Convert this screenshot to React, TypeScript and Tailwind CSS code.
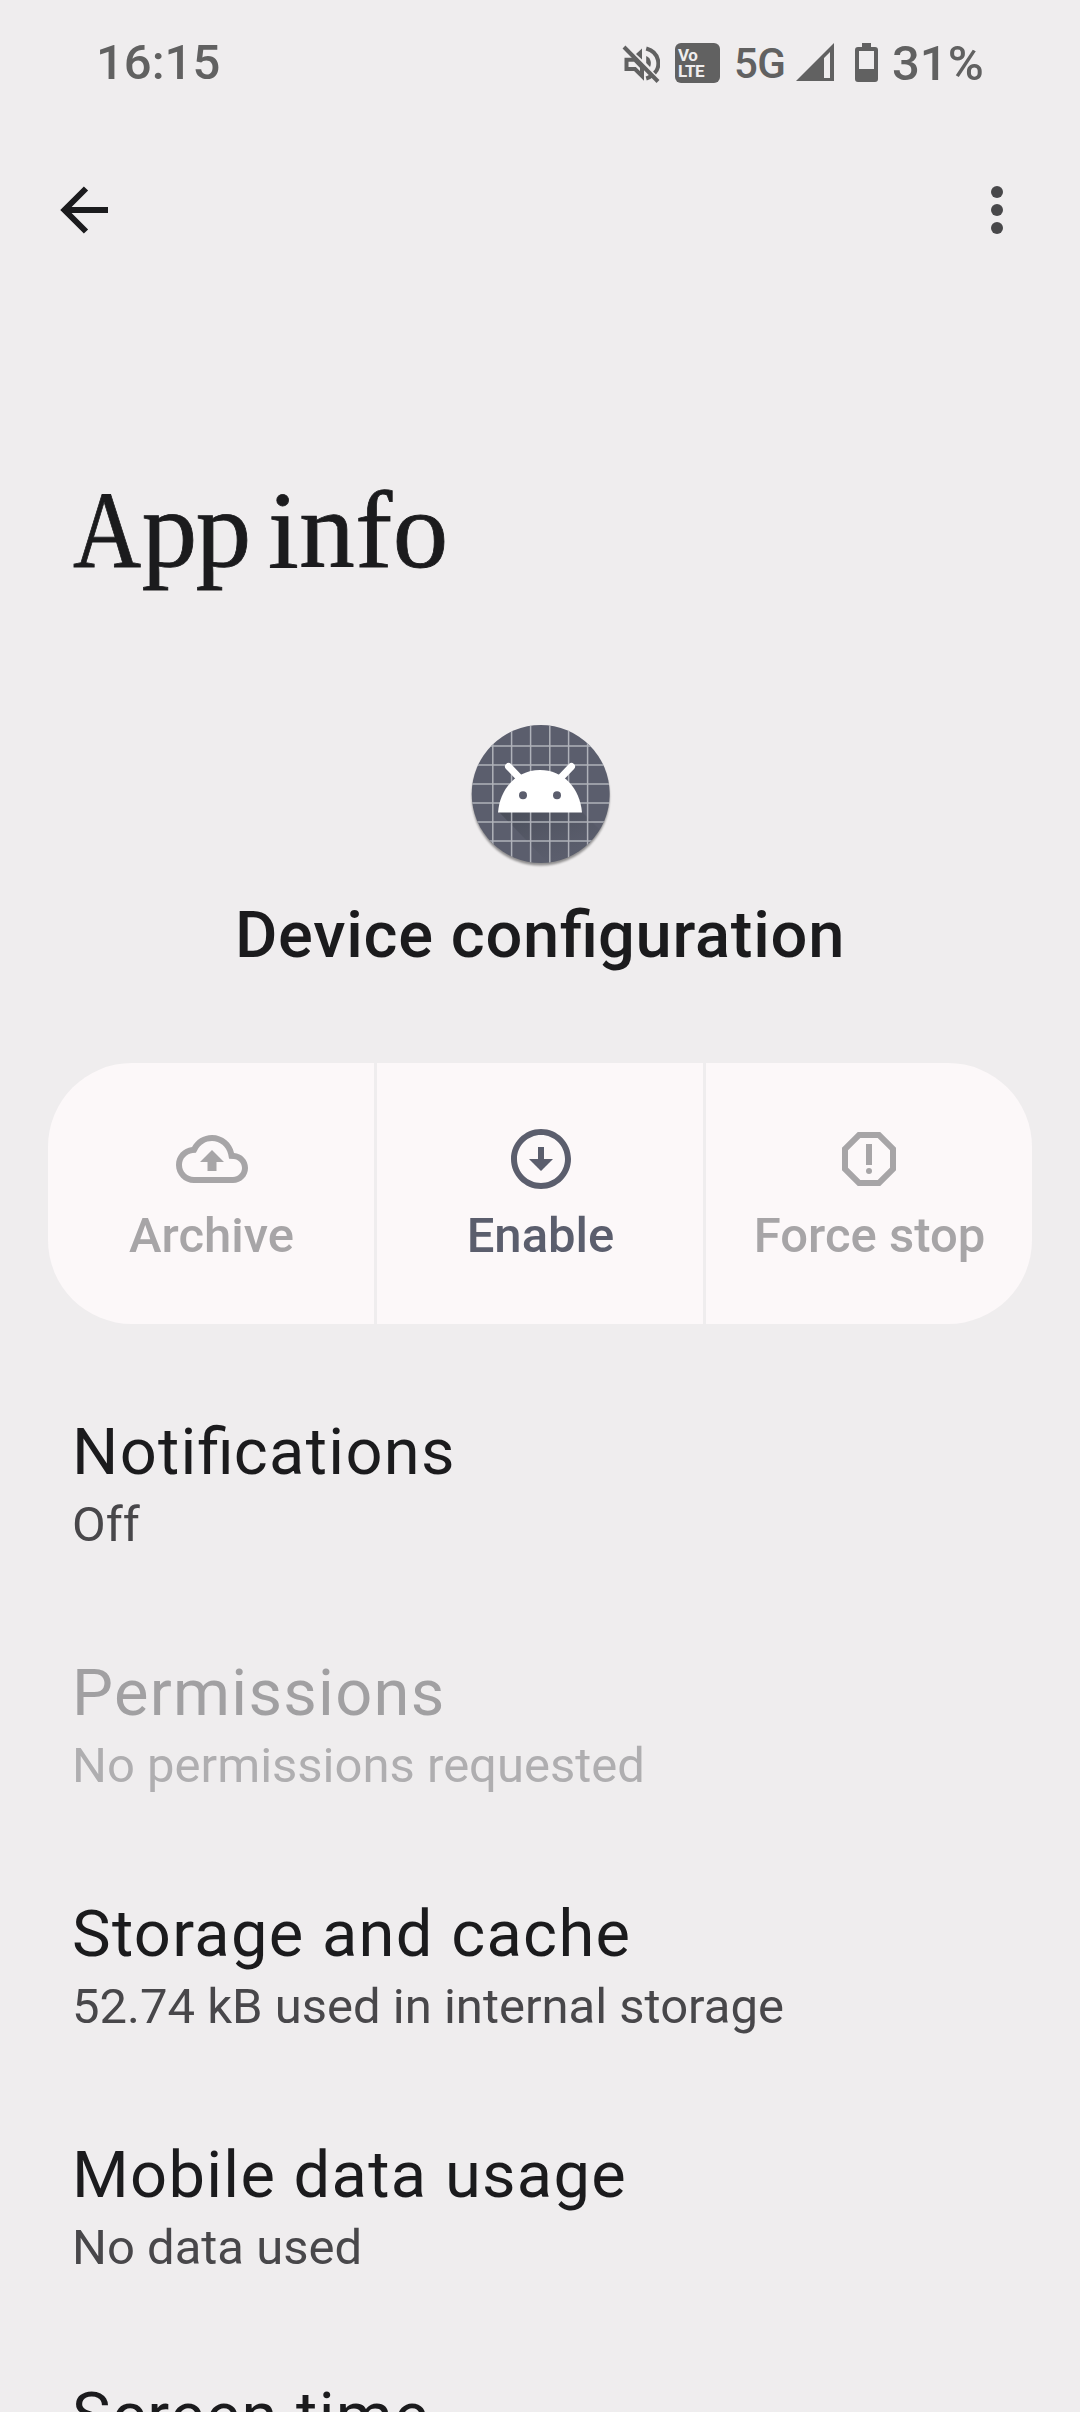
import React from "react";

function Fi() {
  return <span className="tracking-normal">fi</span>;
}

function StatusBar() {
  return (
    <header className="flex h-[120px] w-full text-[#616161]">
      <div className="ml-[96px] mt-[34px] w-[503px] shrink-0 text-[49px] font-medium leading-[58px]">16:15</div>
      <div className="flex">
        <svg className="ml-[23px] mt-[44px] h-[40px] w-[38px] shrink-0" viewBox="0 0 38 40" fill="none" stroke="#616161">
          <path d="M4.5 15.8H13L20 23V32L13 25H4.5Z" strokeWidth="4" />
          <path d="M14 10L20 4.5V15.500Z" fill="#616161" stroke="none" />
          <path d="M24.2 4.500C38.500 8.500 38.500 23 32.500 29M24.200 34.500C26 34 28 33 29.500 31.500" strokeWidth="4" />
          <path d="M24.200 12C29.500 14.500 29.500 20 28 23L24.200 19Z" fill="#616161" stroke="none" />
          <path d="M2 3L36 37.500" strokeWidth="4" />
        </svg>
        <div className="ml-[15px] mt-[43px] h-[40px] w-[45px] shrink-0 rounded-[6px] bg-[#616161] pl-[3px] pt-[4px] text-[17px] font-bold leading-[16px] tracking-[-0.4px] text-[#efedee]">
          <div>Vo</div>
          <div>LTE</div>
        </div>
        <div className="ml-[14px] mt-[40px] w-[52px] shrink-0 text-[42px] font-medium leading-[48px] tracking-[-0.5px]">5G</div>
        <svg className="ml-[10px] mt-[43px] h-[39px] w-[38px] shrink-0" viewBox="0 0 38 39">
          <path fillRule="evenodd" fill="#616161" d="M0 38L38 0V38ZM28 15V35H34V9Z" />
        </svg>
        <svg className="ml-[21px] mt-[43px] h-[39px] w-[23px] shrink-0" viewBox="0 0 23 39">
          <path fillRule="evenodd" fill="#616161" d="M7 0H16V4H20Q23 4 23 7V36Q23 39 20 39H3Q0 39 0 36V7Q0 4 3 4H7ZM4 8V26H19V8Z" />
        </svg>
        <div className="ml-[14px] mt-[35px] shrink-0 text-[49px] font-medium leading-[58px]">31%</div>
      </div>
    </header>
  );
}

function Toolbar() {
  return (
    <nav className="flex h-[180px] items-start justify-between pl-[48px] pr-[47px] pt-[54px]">
      <svg className="h-[72px] w-[72px]" viewBox="0 0 72 72" fill="none" stroke="#1b1b1d" strokeWidth="6">
        <path d="M60 36H17M38 14.5L16.5 36L38 57.5" />
      </svg>
      <svg className="h-[72px] w-[72px]" viewBox="0 0 72 72" fill="#48484a">
        <circle cx="36" cy="18" r="6" />
        <circle cx="36" cy="36" r="6" />
        <circle cx="36" cy="54" r="6" />
      </svg>
    </nav>
  );
}

function AppIcon() {
  return (
    <svg className="mx-auto h-[150px] w-[150px]" viewBox="0 0 150 150">
      <defs>
        <clipPath id="disc"><circle cx="75.7" cy="74" r="69" /></clipPath>
        <linearGradient id="cast" x1="0" y1="0" x2="0.7" y2="1">
          <stop offset="0" stopColor="#3f444e" stopOpacity="0.65" />
          <stop offset="0.8" stopColor="#4c505c" stopOpacity="0" />
        </linearGradient>
        <filter id="soft" x="-10%" y="-10%" width="120%" height="120%"><feGaussianBlur stdDeviation="1.2" /></filter>
      </defs>
      <circle cx="75.7" cy="76.8" r="68.800" fill="#000" opacity="0.4" filter="url(#soft)" />
      <circle cx="75.7" cy="74" r="69" fill="#5b5e6d" />
      <g clipPath="url(#disc)">
        <path d="M34 92H117L150 125V150H90Z" fill="url(#cast)" />
        <path d="M27.8 0V150M46.6 0V150M65.6 0V150M84.8 0V150M103.6 0V150M122.6 0V150M0 26H150M0 45H150M0 64H150M0 83H150M0 102H150M0 121H150" stroke="#c5c7cd" strokeWidth="1.5" opacity="0.8" />
      </g>
      <path d="M33 92.500C35 68 52 50 75 50S115 68 117 92.500Z" fill="#fff" />
      <path d="M43.500 46.500L55 58.500M106.500 46.500L95 58.500" stroke="#fff" strokeWidth="7" strokeLinecap="round" />
      <circle cx="58" cy="75.300" r="4" fill="#5b5e6d" />
      <circle cx="92" cy="75.300" r="4" fill="#5b5e6d" />
    </svg>
  );
}

function Action({ label, className, iconClass, children }: { label: string; className: string; iconClass: string; children: React.ReactNode }) {
  return (
    <button className={"flex h-[261px] flex-col items-center bg-[#fcf8f9] pt-[60px] " + className}>
      <svg className={"h-[72px] " + iconClass} viewBox="0 0 24 24" fill="currentColor">{children}</svg>
      <span className="mt-[12px] pl-[1px] text-[49px] font-medium leading-[58px]">{label}</span>
    </button>
  );
}

function Item({ title, detail, disabled }: { title: React.ReactNode; detail?: string; disabled?: boolean }) {
  return (
    <div className="h-[241px] pl-[72px]">
      <div className={"text-[65px] leading-[76px] tracking-[1.3px] " + (disabled ? "text-[#a1a0a2]" : "text-[#1b1b1d]")}>{title}</div>
      {detail && <div className={"text-[49px] leading-[70px] " + (disabled ? "text-[#afaeb0]" : "text-[#48474a]")}>{detail}</div>}
    </div>
  );
}

export default function App() {
  return (
    <div className="h-[2412px] w-[1080px] overflow-hidden bg-[#efedee] font-['Roboto',sans-serif]">
      <StatusBar />
      <Toolbar />
      <h1 className="mt-[160px] h-[143px] whitespace-pre pl-[73px] font-['Liberation_Serif',serif] text-[111px] leading-[140px] tracking-[-1.5px] text-[#1b1b1d] [-webkit-text-stroke:0.8px_#1b1b1d] [word-spacing:-8px]">
        <span className="-mr-[10px] inline-block origin-left scale-x-[0.85]">A</span>pp <span className="tracking-[0.5px]">info</span>
      </h1>
      <div className="mt-[117px]"><AppIcon /></div>
      <h2 className="mt-[27px] h-[77px] text-center text-[65px] font-medium leading-[76px] tracking-[0.75px] text-[#1b1b1d]">
        Device con<Fi />guration
      </h2>
      <section className="mt-[89px] grid grid-cols-[326px_326px_326px] gap-[3px] pl-[48px]">
        <Action label="Archive" iconClass="ml-[2px] w-[72px]" className="rounded-l-[84px] text-[#a7a5a7]">
          <path d="M19.35 10.04C18.67 6.59 15.64 4 12 4 9.11 4 6.600 5.640 5.350 8.040 2.340 8.360 0 10.910 0 14c0 3.310 2.690 6 6 6h13c2.760 0 5-2.240 5-5 0-2.640-2.050-4.780-4.650-4.960zM19 18H6c-2.210 0-4-1.790-4-4 0-2.050 1.530-3.760 3.560-3.970l1.070-.11.5-.95C8.080 7.140 9.940 6 12 6c2.620 0 4.880 1.860 5.390 4.430l.3 1.500 1.530.11c1.560.1 2.780 1.410 2.780 2.960 0 1.650-1.350 3-3 3zM8 13h2.500v3h3v-3H16l-4-4z" />
        </Action>
        <Action label="Enable" iconClass="ml-[2px] w-[72px]" className="text-[#5b5e6d]">
          <path d="M12 4c4.410 0 8 3.590 8 8s-3.590 8-8 8-8-3.590-8-8 3.590-8 8-8m0-2C6.480 2 2 6.480 2 12s4.480 10 10 10 10-4.480 10-10S17.520 2 12 2zm1 10V8h-2v4H8l4 4 4-4h-3z" />
        </Action>
        <Action label="Force stop" iconClass="w-[72px]" className="rounded-r-[84px] text-[#a7a5a7]">
          <path d="M15.730 3H8.270L3 8.270v7.460L8.270 21h7.460L21 15.730V8.270L15.730 3zM19 14.900L14.900 19H9.100L5 14.900V9.100L9.100 5h5.800L19 9.100v5.800z" />
          <circle cx="12" cy="16" r="1" />
          <path d="M11 7h2v7h-2z" />
        </Action>
      </section>
      <main className="pt-[90px]">
        <Item title={<>Noti<Fi />cations</>} detail="Off" />
        <Item title="Permissions" detail="No permissions requested" disabled />
        <Item title="Storage and cache" detail="52.74 kB used in internal storage" />
        <Item title="Mobile data usage" detail="No data used" />
        <Item title="Screen time" />
      </main>
    </div>
  );
}
